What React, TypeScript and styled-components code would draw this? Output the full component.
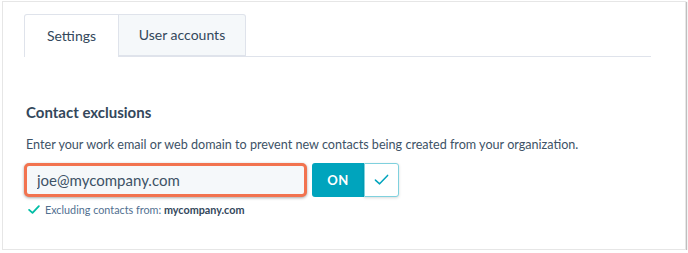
import React from 'react';
import styled, { createGlobalStyle } from 'styled-components';

const GlobalStyle = createGlobalStyle`
  html, body {
    margin: 0;
    padding: 0;
    background: #ffffff;
  }
  body {
    font-family: Lato, "Noto Sans", sans-serif;
    color: #33475b;
  }
`;

const Panel = styled.div`
  box-sizing: border-box;
  margin: 1px 0 0 2px;
  width: 684px;
  height: 249px;
  background: #ffffff;
  border: 1px solid #e6e6e6;
  box-shadow: 1px 1px 1px rgba(0, 0, 0, 0.25);
  padding: 12px 34px 0 21px;
`;

const TabBar = styled.div`
  display: flex;
  height: 42px;
  border-bottom: 1px solid #dfe3eb;
`;

const Tab = styled.div<{ $active?: boolean }>`
  box-sizing: border-box;
  width: ${p => (p.$active ? '95px' : '127px')};
  height: ${p => (p.$active ? '43px' : '42px')};
  display: flex;
  align-items: center;
  justify-content: center;
  font-size: 14px;
  color: #33475b;
  background: ${p => (p.$active ? '#ffffff' : '#f5f8fa')};
  border: 1px solid #dfe3eb;
  border-bottom: ${p => (p.$active ? 'none' : '1px solid #dfe3eb')};
  border-left: ${p => (p.$active ? '1px solid #dfe3eb' : 'none')};
  border-radius: ${p => (p.$active ? '3px 0 0 0' : '0 3px 0 0')};
  padding-bottom: 2px;
`;

const Section = styled.section`
  padding: 46px 0 0 2px;
`;

const Heading = styled.h2`
  margin: 0;
  font-size: 15px;
  font-weight: 700;
  line-height: 18px;
  color: #33475b;
`;

const Description = styled.p`
  margin: 16px 0 0;
  font-size: 12.6px;
  line-height: 16px;
  color: #3d5266;
`;

const Row = styled.div`
  display: flex;
  align-items: center;
  gap: 5px;
  margin-top: 10px;
  margin-left: -2px;
`;

const EmailInput = styled.input`
  box-sizing: border-box;
  width: 283px;
  height: 34px;
  padding: 0 10px;
  font-family: inherit;
  font-size: 15px;
  color: #3d5266;
  background: #f5f8fa;
  border: 3px solid #f2734f;
  border-radius: 5px;
  box-shadow: 0 1px 3px rgba(0, 0, 0, 0.35);
  outline: none;
`;

const Toggle = styled.div`
  display: flex;
  height: 34px;
`;

const ToggleLabel = styled.div`
  width: 52px;
  display: flex;
  align-items: center;
  justify-content: center;
  background: #00a4bd;
  color: #ffffff;
  font-size: 13px;
  font-weight: 700;
  letter-spacing: 0.5px;
  border-radius: 3px 0 0 3px;
`;

const ToggleCheck = styled.div`
  box-sizing: border-box;
  width: 35px;
  display: flex;
  align-items: center;
  justify-content: center;
  background: #ffffff;
  border: 1px solid #7fd1de;
  border-radius: 0 3px 3px 0;
  box-shadow: 0 1px 3px rgba(0, 0, 0, 0.15);
  color: #00a4bd;
`;

const Hint = styled.div`
  display: flex;
  align-items: center;
  gap: 5px;
  margin-top: 6px;
  margin-left: 2px;
  font-size: 10.8px;
  color: #516f90;

  strong {
    color: #33475b;
    font-weight: 700;
  }
`;

const Check = ({ size, color, width }: { size: number; color: string; width: number }) => (
  <svg width={size} height={size * 0.75} viewBox="0 0 16 12" fill="none">
    <path d="M1.5 6.5 L6 10.5 L14.5 1.5" stroke={color} strokeWidth={width} strokeLinecap="round" strokeLinejoin="round" />
  </svg>
);

export default function App() {
  return (
    <>
      <GlobalStyle />
      <Panel>
        <TabBar>
          <Tab $active>Settings</Tab>
          <Tab>User accounts</Tab>
        </TabBar>
        <Section>
          <Heading>Contact exclusions</Heading>
          <Description>
            Enter your work email or web domain to prevent new contacts being created from your organization.
          </Description>
          <Row>
            <EmailInput defaultValue="joe@mycompany.com" />
            <Toggle>
              <ToggleLabel>ON</ToggleLabel>
              <ToggleCheck>
                <Check size={15} color="#00a4bd" width={1.6} />
              </ToggleCheck>
            </Toggle>
          </Row>
          <Hint>
            <Check size={12} color="#00bda5" width={2.4} />
            <span>
              Excluding contacts from: <strong>mycompany.com</strong>
            </span>
          </Hint>
        </Section>
      </Panel>
    </>
  );
}
